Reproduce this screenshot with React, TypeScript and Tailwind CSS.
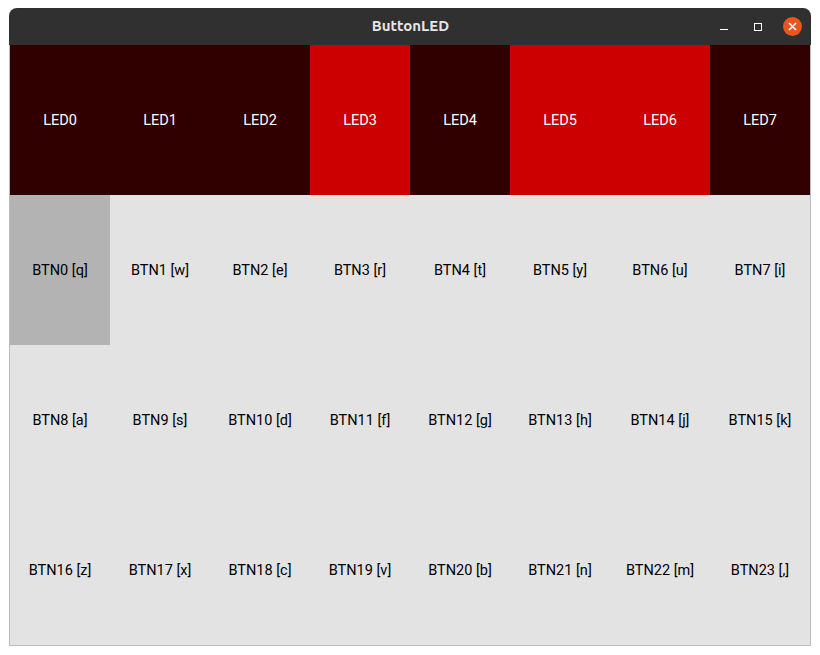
import { useState } from 'react';

const leds = [false, false, false, true, false, true, true, false];
const keys = ['q', 'w', 'e', 'r', 't', 'y', 'u', 'i', 'a', 's', 'd', 'f', 'g', 'h', 'j', 'k', 'z', 'x', 'c', 'v', 'b', 'n', 'm', ','];

export default function App() {
  const [pressed, setPressed] = useState(0);

  return (
    <div className="w-[820px] h-[655px] bg-white pl-[9px] pt-[8px]" style={{ fontFamily: 'Roboto, "Liberation Sans", sans-serif' }}>
      <div className="w-[802px] flex flex-col">
        <div className="h-[37px] bg-[#303030] rounded-t-[8px] flex items-center relative">
          <div className="flex-1 text-center text-[15px] font-bold text-[#e6e6e6] pl-[1px]" style={{ fontFamily: 'Ubuntu, "Open Sans", sans-serif' }}>
            ButtonLED
          </div>
          <div className="absolute right-[9px] top-0 h-full flex items-center">
            <div className="w-[8px] h-[1px] bg-white mt-[6px] mr-[26px]" />
            <div className="w-[8px] h-[8px] border border-white mr-[21px]" />
            <div className="w-[19px] h-[19px] rounded-full bg-[#e95420] flex items-center justify-center">
              <svg width="9" height="9" viewBox="0 0 9 9">
                <path d="M1 1L8 8M8 1L1 8" stroke="white" strokeWidth="1.6" />
              </svg>
            </div>
          </div>
        </div>
        <div className="border-x border-b border-[#bdbdbd] bg-[#e3e3e3]">
          <div className="grid grid-cols-8">
            {leds.map((on, i) => (
              <div
                key={i}
                className={`h-[150px] pt-[2px] flex items-center justify-center text-[14.5px] text-white ${on ? 'bg-[#cc0000]' : 'bg-[#300000]'}`}
              >
                LED{i}
              </div>
            ))}
          </div>
          <div className="grid grid-cols-8">
            {keys.map((k, i) => (
              <div
                key={i}
                onMouseDown={() => setPressed(i)}
                className={`h-[150px] pt-[2px] flex items-center justify-center text-[14.5px] text-black ${pressed === i ? 'bg-[#b3b3b3]' : 'bg-[#e3e3e3]'}`}
              >
                BTN{i} [{k}]
              </div>
            ))}
          </div>
        </div>
      </div>
    </div>
  );
}
